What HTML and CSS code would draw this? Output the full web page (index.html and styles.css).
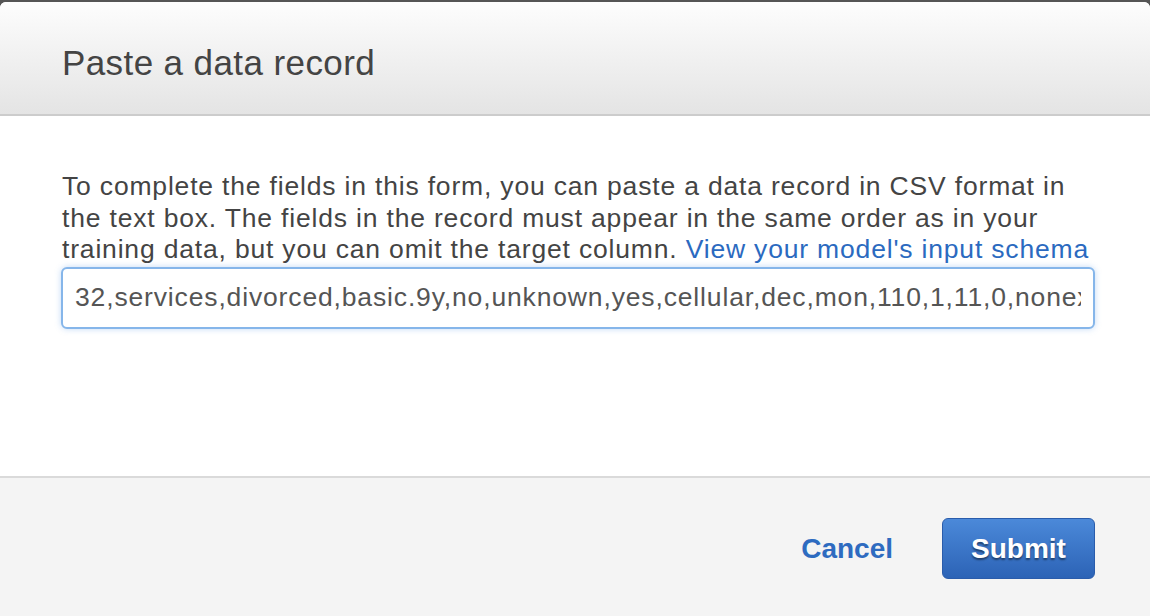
FILE: index.html
```html
<!DOCTYPE html>
<html>
<head>
<meta charset="utf-8">
<link rel="stylesheet" href="styles.css">
</head>
<body>
<div class="modal">
  <div class="modal-header">
    <h1 class="title">Paste a data record</h1>
  </div>
  <div class="modal-body">
    <p class="intro">To complete the fields in this form, you can paste a data record in CSV format in the text box. The fields in the record must appear in the same order as in your training data, but you can omit the target column. <a class="link" href="#">View your model's input schema</a></p>
    <input class="record-input" type="text" value="32,services,divorced,basic.9y,no,unknown,yes,cellular,dec,mon,110,1,11,0,nonexistent,-0.1,93.2,-42.0,4.286,5195.8">
  </div>
  <div class="modal-footer">
    <a class="cancel" href="#">Cancel</a>
    <button class="submit" type="button">Submit</button>
  </div>
</div>
</body>
</html>
```

FILE: styles.css
```css
html, body {
  margin: 0;
  padding: 0;
  height: 100%;
}
body {
  background: #555555;
  font-family: "Liberation Sans", Arial, sans-serif;
  overflow: hidden;
}
.modal {
  margin-top: 2px;
  height: 614px;
  background: #ffffff;
  border-radius: 6px 6px 0 0;
  display: flex;
  flex-direction: column;
  overflow: hidden;
}
.modal-header {
  flex: none;
  height: 114px;
  box-sizing: border-box;
  background: linear-gradient(to bottom, #fdfdfd 0%, #e4e4e4 100%);
  border-bottom: 2px solid #cccccc;
  padding: 41px 0 0 62px;
}
.title {
  margin: 0;
  font-size: 35px;
  line-height: 40px;
  letter-spacing: 0.4px;
  font-weight: normal;
  color: #444444;
}
.modal-body {
  flex: 1;
  padding: 55px 50px 0 62px;
}
.intro {
  margin: 0;
  font-size: 26.5px;
  line-height: 31.5px;
  letter-spacing: 0.82px;
  color: #444444;
}
.link {
  color: #2b6ac0;
  text-decoration: none;
}
.record-input {
  display: block;
  box-sizing: border-box;
  width: 1034px;
  height: 62px;
  margin: 1px 0 0 -1px;
  padding: 0 12px;
  border: 2px solid #86b6ea;
  border-radius: 6px;
  box-shadow: 0 0 6px rgba(82, 150, 230, 0.35);
  font-family: "Liberation Sans", Arial, sans-serif;
  font-size: 26.5px;
  letter-spacing: 0.85px;
  color: #555555;
  outline: none;
  background: #ffffff;
}
.modal-footer {
  flex: none;
  height: 140px;
  box-sizing: border-box;
  border-top: 2px solid #dadada;
  background: #f4f4f4;
  display: flex;
  justify-content: flex-end;
  align-items: flex-start;
  padding: 40px 55px 0 0;
  gap: 49px;
}
.cancel {
  margin-top: 15px;
  font-size: 28px;
  font-weight: bold;
  color: #2e6bc0;
  text-decoration: none;
  line-height: 32px;
}
.submit {
  width: 153px;
  height: 61px;
  box-sizing: border-box;
  border: 1px solid #2a5cab;
  border-radius: 6px;
  background: linear-gradient(to bottom, #4b89d9 0%, #2c63b6 100%);
  color: #ffffff;
  font-family: "Liberation Sans", Arial, sans-serif;
  font-size: 28px;
  font-weight: bold;
  text-shadow: 0 2px 2px rgba(0, 0, 0, 0.45);
  padding: 0;
}
```
